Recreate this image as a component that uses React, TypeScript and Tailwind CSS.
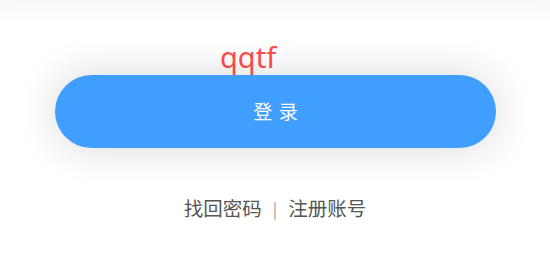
export default function App() {
  return (
    <div className="relative w-[550px] h-[275px] overflow-hidden bg-white font-['Noto_Sans','Noto_Sans_CJK_SC',sans-serif]">
      {/* faint shadow from the field above */}
      <div className="h-0 shadow-[0_0_24px_12px_rgba(0,0,0,0.035)]" />

      <div className="pl-[220px] pt-[37px] text-[29px] leading-[40px] text-[#ff4d4f]">qqtf</div>

      <button className="relative -mt-[2px] ml-[55px] flex h-[73px] w-[441px] items-center justify-center rounded-full bg-[#409eff] pl-[0.35em] text-[19px] tracking-[0.35em] text-white shadow-[0_0_40px_rgba(0,0,0,0.16)] font-['Noto_Sans_CJK_SC',sans-serif]">
        登录
      </button>

      <div className="mt-[48px] flex items-center justify-center text-[19.5px] leading-[24px] text-[#555] font-['Noto_Sans_CJK_SC',sans-serif]">
        <span>找回密码</span>
        <span className="px-[11px] text-[16px] text-[#999]">|</span>
        <span>注册账号</span>
      </div>
    </div>
  )
}
